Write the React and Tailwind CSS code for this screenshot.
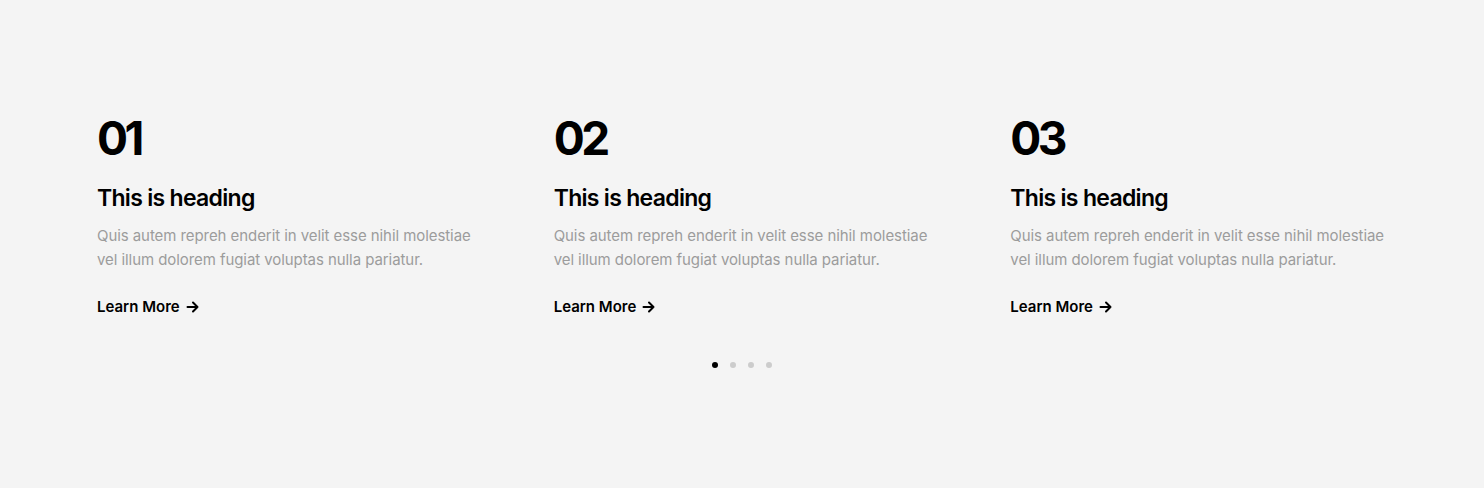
import React from 'react'

const items = [
  { num: '01', title: 'This is heading' },
  { num: '02', title: 'This is heading' },
  { num: '03', title: 'This is heading' },
]

const Arrow = () => (
  <svg width="13" height="12" viewBox="0 0 13 12" fill="none" stroke="currentColor" strokeWidth="2" strokeLinecap="round" strokeLinejoin="round">
    <path d="M1.5 6h10M7 1.5 11.5 6 7 10.5" />
  </svg>
)

export default function App() {
  return (
    <div className="min-h-[488px] bg-[#f4f4f4] font-['Inter',sans-serif]">
      <div className="mx-auto w-[1290px] pt-[110px]">
        <div className="grid grid-cols-3 gap-x-[80px]">
          {items.map((item) => (
            <div key={item.num}>
              <h2 className="text-[46px] font-bold leading-[56px] tracking-[-3.5px] text-black">{item.num}</h2>
              <h3 className="mt-[17px] text-[23px] font-semibold leading-[30px] tracking-[-0.7px] text-black">{item.title}</h3>
              <p className="mt-[11px] text-[15px] leading-[24px] tracking-[-0.07px] text-[#9c9c9c]">
                Quis autem repreh enderit in velit esse nihil molestiae vel illum dolorem fugiat voluptas nulla pariatur.
              </p>
              <a className="mt-[23px] flex items-center gap-[6px] text-[15px] font-semibold leading-[24px] text-black">
                Learn More <Arrow />
              </a>
            </div>
          ))}
        </div>
        <div className="mt-[43px] flex justify-center gap-[12px]">
          <span className="h-[6px] w-[6px] rounded-full bg-black" />
          <span className="h-[6px] w-[6px] rounded-full bg-[#cccccc]" />
          <span className="h-[6px] w-[6px] rounded-full bg-[#cccccc]" />
          <span className="h-[6px] w-[6px] rounded-full bg-[#cccccc]" />
        </div>
      </div>
    </div>
  )
}
